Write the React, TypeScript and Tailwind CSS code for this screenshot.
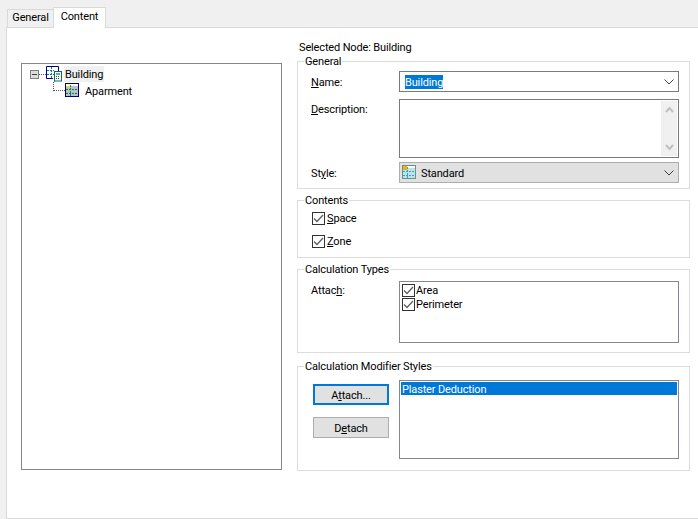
import type { ReactNode } from 'react';

function ChevronDown() {
  return (
    <svg width="10" height="6" viewBox="0 0 10 6" fill="none" stroke="#404040" strokeWidth="1">
      <path d="M0.5 0.5 L5 5 L9.5 0.5" />
    </svg>
  );
}

function ScrollArrow({ up }: { up?: boolean }) {
  return (
    <svg width="9" height="7" viewBox="0 0 9 7" fill="none" stroke="#c0c0c0" strokeWidth="2">
      <path d={up ? 'M1 6 L4.5 2 L8 6' : 'M1 1 L4.5 5 L8 1'} />
    </svg>
  );
}

function CheckBox() {
  return (
    <span className="flex h-[13px] w-[13px] shrink-0 items-center justify-center border border-[#333333] bg-white">
      <svg width="11" height="9" viewBox="0 0 11 9" fill="none" stroke="#5f5f5f" strokeWidth="1.3">
        <path d="M1 4.5 L4 7.5 L10 1" />
      </svg>
    </span>
  );
}

function BuildingIcon() {
  return (
    <svg width="16" height="16" viewBox="0 0 16 16" className="shrink-0">
      <path d="M0.5 0.5 H12.5 V5 M7 12.5 H0.5 V0.5" fill="#ffffff" stroke="#000080" />
      <path d="M1 4.5 H8 M1 8.5 H8" stroke="#008080" strokeDasharray="2 1" />
      <path d="M5.5 1 V12" stroke="#008080" strokeDasharray="2 1" />
      <rect x="8.5" y="5.5" width="7" height="9.5" fill="#ffffff" stroke="#006f6f" />
      <rect x="8" y="5" width="1" height="10.5" fill="#006f6f" />
      <rect x="10" y="7" width="4" height="2" fill="#5fb0b0" />
      <rect x="10" y="10" width="1" height="1" fill="#c00000" />
      <rect x="12" y="10" width="1" height="1" fill="#008000" />
      <rect x="10" y="12" width="1" height="1" fill="#008000" />
      <rect x="12" y="12" width="1" height="1" fill="#c00000" />
    </svg>
  );
}

function SpaceIcon({ navy }: { navy?: boolean }) {
  return (
    <svg width="14" height="14" viewBox="0 0 14 14" className="shrink-0">
      <rect x="0.5" y="0.5" width="13" height="13" fill={navy ? '#c0c0c0' : '#bfe3e3'} stroke={navy ? '#000080' : '#6f8f8f'} />
      <rect x="1" y="1" width="12" height="2" fill="#ffffff" />
      <path d="M1 3.5 H5" stroke="#f2e600" strokeWidth="1.4" />
      {navy ? null : <rect x="1" y="1" width="4" height="4" fill="#f0b400" />}
      <path d="M1 6.5 H13 M1 10.5 H13 M5.5 2 V13" stroke={navy ? '#008080' : '#30a0e0'} strokeDasharray="2 1" />
    </svg>
  );
}

function GroupBox({ title, className, children }: { title: string; className: string; children: ReactNode }) {
  return (
    <fieldset className={`border border-[#dcdcdc] ${className}`}>
      <legend className="ml-[6px] px-px pt-[2px] leading-[14px]">{title}</legend>
      {children}
    </fieldset>
  );
}

export default function App() {
  return (
    <div className="flex h-[519px] w-[698px] flex-col overflow-hidden bg-[#f0f0f0] font-['Roboto',sans-serif] text-[11px] tracking-[-0.15px] text-black">
      {/* tab strip */}
      <div className="flex h-[27px] items-end pl-[7px]">
        <div className="flex h-[18px] w-[46px] items-center justify-center border-l border-t border-[#d9d9d9]">General</div>
        <div className="relative z-10 -mb-px flex h-[21px] w-[53px] items-center justify-center border-x border-t border-[#d9d9d9] bg-white pb-[2px]">Content</div>
      </div>

      <div className="ml-[6px] flex flex-1 border-y border-l border-[#d9d9d9] bg-white pl-[14px] pt-[12px]">
        {/* tree */}
        <div className="mt-[23px] h-[407px] w-[261px] shrink-0 border border-[#828790] bg-white pl-[8px] pt-[2px]">
          <div className="flex h-[16px] items-center">
            <span className="flex h-[9px] w-[9px] items-center justify-center border border-[#808080] bg-[#dcdcdc]">
              <span className="h-px w-[5px] bg-[#404040]" />
            </span>
            <span className="w-[7px] border-t border-dotted border-[#555555]" />
            <BuildingIcon />
            <span className="ml-[2px] flex h-[16px] w-[40px] items-center bg-[#f0f0f0] pl-px pt-[2px]">Building</span>
          </div>
          <div className="ml-[23px] flex h-[18px] items-end">
            <span className="mb-[9px] h-[9px] w-[12px] border-b border-l border-dotted border-[#555555]" />
            <span className="mb-[3px]"><SpaceIcon navy /></span>
            <span className="ml-[6px]">Aparment</span>
          </div>
        </div>

        {/* details */}
        <div className="ml-[15px] w-[393px] shrink-0">
          <div className="ml-[2px] h-[13px] leading-[16px]">Selected Node: Building</div>

          <GroupBox title="General" className="h-[136px]">
            <div className="grid grid-cols-[88px_280px] pl-[13px] pt-[2px]">
              <span className="pt-[4px]"><u>N</u>ame:</span>
              <div className="flex h-[21px] items-center justify-between border border-[#7a7a7a] bg-white pl-[5px] pr-[4px]">
                <span className="bg-[#0078d7] leading-[13px] pt-px text-white">Building</span>
                <ChevronDown />
              </div>
              <span className="mt-[7px] pt-[3px]"><u>D</u>escription:</span>
              <div className="mt-[7px] flex h-[59px] justify-end border border-[#7a7a7a] bg-white p-px">
                <div className="flex w-[16px] flex-col items-center justify-between bg-[#f0f0f0] py-[5px]">
                  <ScrollArrow up />
                  <ScrollArrow />
                </div>
              </div>
              <span className="mt-[4px] pt-[4px]">St<u>y</u>le:</span>
              <div className="mt-[4px] flex h-[21px] items-center justify-between border border-[#adadad] bg-[#e1e1e1] pl-[2px] pr-[4px]">
                <span className="flex items-center gap-[5px]">
                  <span className="mb-[2px]"><SpaceIcon /></span>
                  <span className="pt-[4px]">Standard</span>
                </span>
                <ChevronDown />
              </div>
            </div>
          </GroupBox>

          <GroupBox title="Contents" className="mt-[3px] h-[66px]">
            <div className="flex flex-col gap-[10px] pl-[14px] pt-[4px]">
              <label className="flex h-[13px] items-center gap-[2px]"><CheckBox /><span className="pt-[2px]"><u>S</u>pace</span></label>
              <label className="flex h-[13px] items-center gap-[2px]"><CheckBox /><span className="pt-[2px]"><u>Z</u>one</span></label>
            </div>
          </GroupBox>

          <GroupBox title="Calculation Types" className="mt-[3px] h-[92px]">
            <div className="grid grid-cols-[88px_280px] pl-[13px] pt-[4px]">
              <span className="pt-[2px]">Attac<u>h</u>:</span>
              <div className="h-[62px] border border-[#828790] bg-white pl-[2px] pt-px">
                <div className="flex h-[14px] items-center gap-px"><CheckBox /><span className="pt-[2px]">Area</span></div>
                <div className="flex h-[14px] items-center gap-px"><CheckBox /><span className="pt-[2px]">Perimeter</span></div>
              </div>
            </div>
          </GroupBox>

          <GroupBox title="Calculation Modifier Styles" className="mt-[5px] h-[113px]">
            <div className="grid grid-cols-[86px_280px] pl-[15px] pt-[6px]">
              <div className="flex flex-col gap-[12px] pt-[4px]">
                <button className="h-[21px] w-[76px] border-2 border-[#0078d7] bg-[#e1e1e1] pt-[2px]">A<u>t</u>tach...</button>
                <button className="h-[21px] w-[76px] border border-[#adadad] bg-[#e1e1e1] pt-[3px]">D<u>e</u>tach</button>
              </div>
              <div className="h-[79px] border border-[#828790] bg-white p-px">
                <div className="flex h-[13px] items-center bg-[#0078d7] pl-px pt-[3px] text-white">Plaster Deduction</div>
              </div>
            </div>
          </GroupBox>
        </div>
      </div>
    </div>
  );
}
